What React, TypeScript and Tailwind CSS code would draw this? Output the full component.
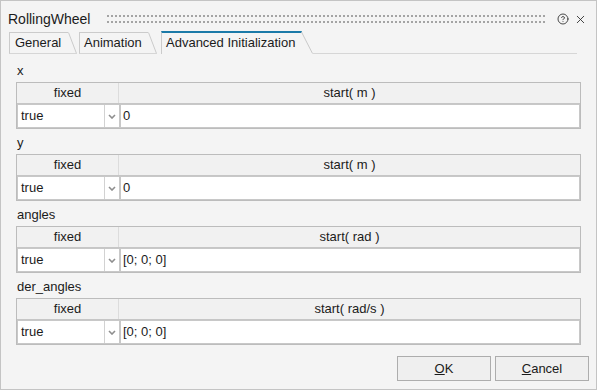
import { CircleHelp, X } from "lucide-react";

const sections = [
  { name: "x", unit: "m", value: "0" },
  { name: "y", unit: "m", value: "0" },
  { name: "angles", unit: "rad", value: "[0; 0; 0]" },
  { name: "der_angles", unit: "rad/s", value: "[0; 0; 0]" },
];

function Grip() {
  return (
    <svg className="flex-1 h-[8px]" height="8" shapeRendering="crispEdges">
      <defs>
        <pattern id="grip" width="4" height="6" patternUnits="userSpaceOnUse">
          <rect x="0" y="0" width="2" height="2" fill="#a4a4a4" />
        </pattern>
      </defs>
      <rect x="0" y="0" width="100%" height="8" fill="url(#grip)" />
    </svg>
  );
}

function Slant({ w, active }: { w: number; active?: boolean }) {
  return (
    <svg width={w} height="23" className="shrink-0">
      {active ? (
        <>
          <line x1="0" y1="1" x2="0.8" y2="1" stroke="#1b7aa8" strokeWidth="2" />
          <line x1="0.5" y1="1" x2={w - 0.5} y2="22.5" stroke="#c9c9c9" strokeWidth="1" />
        </>
      ) : (
        <>
          <line x1="0.5" y1="1.5" x2={w - 0.5} y2="22.5" stroke="#cbcbcb" strokeWidth="1" />
          <line x1="0" y1="22.5" x2={w} y2="22.5" stroke="#d6d6d6" strokeWidth="1" />
        </>
      )}
    </svg>
  );
}

function Chevron() {
  return (
    <svg width="8" height="5" viewBox="0 0 8 5">
      <polyline points="1,1 4,4 7,1" fill="none" stroke="#8e8e8e" strokeWidth="1.6" />
    </svg>
  );
}

export default function App() {
  return (
    <div className="w-[597px] h-[390px] bg-[#f4f4f4] border border-[#c4c4c4] flex flex-col overflow-hidden font-['Liberation_Sans',Arial,sans-serif] text-[#1b1b1b]">
      {/* title bar */}
      <div className="h-[30px] shrink-0 flex items-center pt-[6px] pl-[7px] pr-[9px]">
        <span className="text-[14px] leading-[16px]">RollingWheel</span>
        <div className="flex-1 flex items-center ml-[17px] mr-[12px]">
          <Grip />
        </div>
        <CircleHelp size={12} strokeWidth={1.7} className="text-[#2a2a2a]" />
        <X size={13} strokeWidth={1.6} className="ml-[5px] text-[#2a2a2a]" />
      </div>

      {/* tabs */}
      <div className="h-[23px] shrink-0 flex items-end pl-[8px] text-[13px] leading-[16px]">
        <div className="flex h-[23px] items-end">
          <div className="w-[59px] h-[22px] border-l border-t border-b border-l-[#cbcbcb] border-t-[#cbcbcb] border-b-[#d6d6d6] flex items-center pl-[5px]">
            General
          </div>
          <Slant w={9} />
        </div>
        <div className="flex h-[23px] items-end ml-[2px]">
          <div className="w-[69px] h-[22px] border-l border-t border-b border-l-[#cbcbcb] border-t-[#cbcbcb] border-b-[#d6d6d6] flex items-center pl-[4px]">
            Animation
          </div>
          <Slant w={9} />
        </div>
        <div className="flex h-[23px] items-end ml-[4px]">
          <div className="w-[140px] h-[23px] border-l border-l-[#cbcbcb] border-t-2 border-t-[#1b7aa8] flex items-center pl-[4px] pb-[1px]">
            Advanced Initialization
          </div>
          <Slant w={12} active />
        </div>
        <div className="w-[264px] h-[23px] border-b border-[#d6d6d6]" />
      </div>

      {/* content */}
      <div className="flex flex-col gap-[6px] pt-[9px] px-[15px] text-[13px]">
        {sections.map((s) => (
          <div key={s.name} className="flex flex-col">
            <div className="h-[19px] leading-[16px] pl-[1px]">{s.name}</div>
            <div className="w-[565px] border border-[#bcbcbc] bg-[#f1f1f1]">
              <div className="h-[21px] grid grid-cols-[102px_1fr] border-b border-[#c6c6c6]">
                <div className="border-r border-[#dcdcdc] flex items-center justify-center leading-[16px]">fixed</div>
                <div className="flex items-center justify-center leading-[16px]">
                  start( {s.unit} )
                </div>
              </div>
              <div className="h-[24px] flex">
                <div className="w-[103px] border border-[#c8c8c8] bg-white flex">
                  <div className="flex-1 flex items-center pl-[3px] leading-[16px]">true</div>
                  <div className="w-[15px] border-l border-[#d2d2d2] flex items-center justify-center">
                    <Chevron />
                  </div>
                </div>
                <div className="flex-1 border border-[#c8c8c8] bg-white flex items-center pl-[2px] leading-[16px]">
                  {s.value}
                </div>
              </div>
            </div>
          </div>
        ))}
      </div>

      {/* buttons */}
      <div className="mt-auto flex justify-end gap-[4px] pr-[7px] pb-[8px] text-[13px]">
        <button className="w-[94px] h-[25px] border border-[#adadad] bg-[#efefef] flex items-center justify-center leading-[16px]">
          <span>
            <span className="underline">O</span>K
          </span>
        </button>
        <button className="w-[94px] h-[25px] border border-[#adadad] bg-[#efefef] flex items-center justify-center leading-[16px]">
          <span>
            <span className="underline">C</span>ancel
          </span>
        </button>
      </div>
    </div>
  );
}
